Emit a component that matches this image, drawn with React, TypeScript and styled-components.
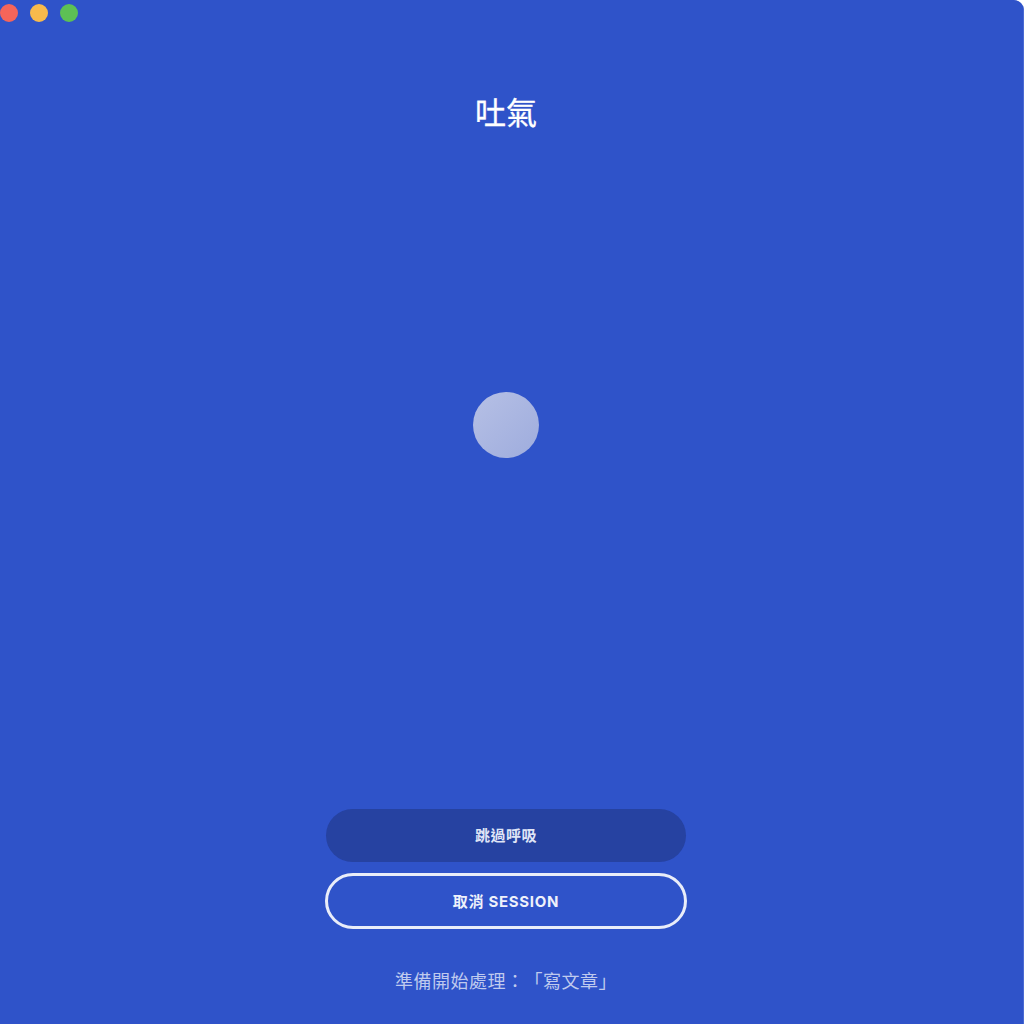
import React from 'react';
import styled, {createGlobalStyle} from 'styled-components';

const GlobalStyle = createGlobalStyle`
  html, body {
    margin: 0;
    padding: 0;
    height: 100%;
    background: #ffffff;
  }
`;

const FONT = `Inter, "Noto Sans CJK TC", "Noto Sans", sans-serif`;

const Window = styled.div`
  position: relative;
  width: 1024px;
  height: 1024px;
  overflow: hidden;
  background: #2f53c9;
  border-top-right-radius: 10px;
  font-family: ${FONT};
  display: flex;
  flex-direction: column;
`;

// traffic lights hang off the window corner
const Lights = styled.div`
  position: absolute;
  top: 4px;
  left: 0;
  display: flex;
  gap: 12px;
`;

const Light = styled.span<{ $color: string }>`
  width: 18px;
  height: 18px;
  border-radius: 50%;
  background: ${props => props.$color};
`;

const Session = styled.main`
  flex: 1;
  width: 1012px;
  display: flex;
  flex-direction: column;
  align-items: center;
`;

const Title = styled.h1`
  margin: 93px 0 0;
  font-size: 31px;
  line-height: 40px;
  font-weight: 400;
  color: #ffffff;
  -webkit-text-stroke: 0.3px #ffffff;
`;

const Orb = styled.div`
  margin-top: 259px;
  width: 66px;
  height: 66px;
  border-radius: 50%;
  background: linear-gradient(135deg, #b6c0e5, #9eacdd);
`;

const Actions = styled.div`
  margin-top: 351px;
  display: flex;
  flex-direction: column;
  align-items: center;
  gap: 11px;
`;

const SkipButton = styled.button`
  width: 360px;
  height: 53px;
  padding: 0 0 3px;
  border: none;
  border-radius: 27px;
  background: #2642a1;
  color: #dfe4f6;
  font-family: ${FONT};
  font-size: 15px;
  font-weight: 700;
  letter-spacing: 0.5px;
`;

const CancelButton = styled.button`
  width: 362px;
  height: 56px;
  padding: 0 0 2px;
  box-sizing: border-box;
  border: 3px solid #e9edf9;
  border-radius: 28px;
  background: transparent;
  color: #eef1fb;
  font-family: ${FONT};
  font-size: 15px;
  font-weight: 700;
  letter-spacing: 0.7px;
`;

const Status = styled.p`
  margin: 40px 0 0;
  font-size: 18px;
  line-height: 26px;
  color: #bfcaee;
  letter-spacing: 0.5px;
  text-spacing-trim: space-all;
  font-feature-settings: "palt" 0, "halt" 0, "chws" 0;
`;

const EdgeLine = styled.div`
  position: absolute;
  top: 0;
  right: 0;
  bottom: 0;
  width: 1px;
  background: #4a6ad2;
`;

export default function App() {
  return (
    <>
      <GlobalStyle/>
      <Window lang="zh-TW">
        <Lights>
          <Light $color="#f5655a"/>
          <Light $color="#f8ba4c"/>
          <Light $color="#5dc054"/>
        </Lights>
        <Session>
          <Title>吐氣</Title>
          <Orb/>
          <Actions>
            <SkipButton>跳過呼吸</SkipButton>
            <CancelButton>取消 SESSION</CancelButton>
          </Actions>
          <Status>準備開始處理：「寫文章」</Status>
        </Session>
        <EdgeLine/>
      </Window>
    </>
  );
}
